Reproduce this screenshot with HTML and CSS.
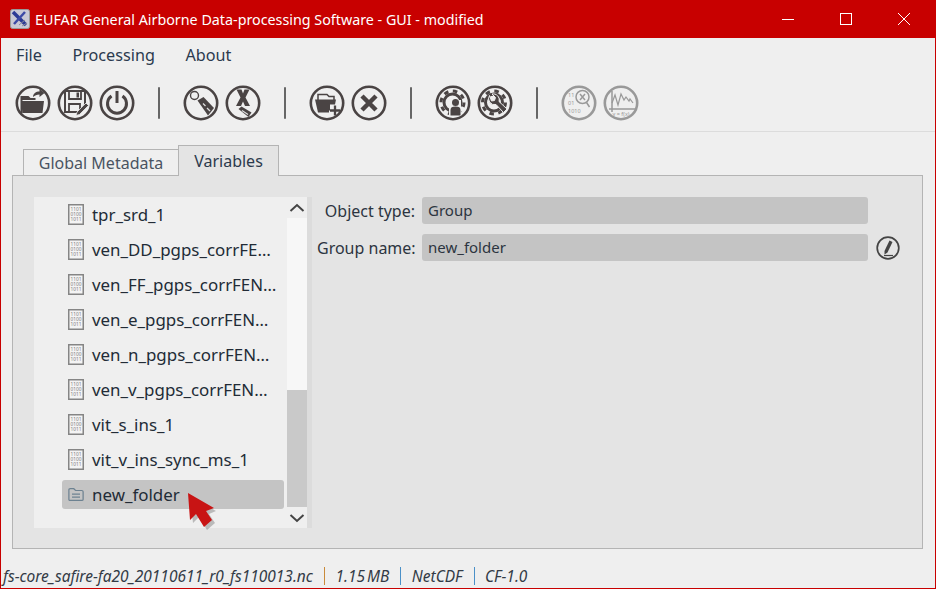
FILE: index.html
```html
<!DOCTYPE html>
<html lang="en">
<head>
	<meta charset="utf-8" />
	<title>EUFAR General Airborne Data-processing Software - GUI - modified</title>
	<link rel="stylesheet" href="styles.css">
</head>
<body>
	<svg class="defs" width="0" height="0">
		<symbol id="ico-ring" viewBox="0 0 36 36">
			<circle cx="18" cy="18" r="16.200" fill="none" stroke="currentColor" stroke-width="2.600"/>
		</symbol>
		<symbol id="ico-sheet" viewBox="0 0 16 21">
			<rect x="0.750" y="0.750" width="14.500" height="19.500" fill="#f4f4f4" stroke="#858585" stroke-width="1.500"/>
		</symbol>
	</svg>

	<div class="window">
		<header class="titlebar">
			<svg class="app-logo" width="20" height="20" viewBox="0 0 20 20">
				<rect x="0.500" y="0.500" width="19" height="19" rx="2" fill="#c9c9d6" stroke="#999"/>
				<path d="M3 3l13 13" stroke="#2c3a96" stroke-width="3.500"/>
				<path d="M15 3L4 15" stroke="#3c4aa6" stroke-width="2.500"/>
				<path d="M9 16l6-5M12 17l5-3" stroke="#8a8a9a" stroke-width="1"/>
			</svg>
			<span class="title">EUFAR General Airborne Data-processing Software - GUI - modified</span>
			<div class="win-controls">
				<svg width="14" height="14" viewBox="0 0 14 14"><path d="M1 7.500h12" stroke="#fff"/></svg>
				<svg width="14" height="14" viewBox="0 0 14 14"><rect x="1.500" y="1.500" width="11" height="11" fill="none" stroke="#fff"/></svg>
				<svg width="14" height="14" viewBox="0 0 14 14"><path d="M1 1l12 12M13 1L1 13" stroke="#fff"/></svg>
			</div>
		</header>

		<nav class="menubar">
			<span>File</span>
			<span>Processing</span>
			<span>About</span>
		</nav>

		<div class="toolbar">
			<div class="tool-group">
				<svg class="tool" viewBox="0 0 36 36"><use href="#ico-ring"/>
					<path d="M5.500 11h8l2 2h5v2H7.500v13h-2z" fill="currentColor"/>
					<path d="M6 16h23l-1.500 12H7.500z" fill="currentColor"/>
					<path d="M18 12c0-3.500 3-5.500 6.500-5.500V4l5 4-5 4V9.500c-3 0-4.500 1-6.500 2.500z" fill="currentColor"/>
				</svg>
				<svg class="tool" viewBox="0 0 36 36"><use href="#ico-ring"/>
					<path d="M8 6h20v14l-6 7H8z" fill="none" stroke="currentColor" stroke-width="2"/>
					<path d="M12 6h12v8H12z" fill="none" stroke="currentColor" stroke-width="1.800"/>
					<path d="M19.500 7.500h2.500v5h-2.500z" fill="currentColor"/>
					<path d="M12 19h11v8H12z" fill="none" stroke="currentColor" stroke-width="1.800"/>
					<path d="M20 27l9-9 2.500 2.500-9 9-3.500 1z" fill="currentColor" stroke="#efefef" stroke-width=".8"/>
				</svg>
				<svg class="tool" viewBox="0 0 36 36"><use href="#ico-ring"/>
					<path d="M12.500 11a9.500 9.500 0 1 0 11 0" fill="none" stroke="currentColor" stroke-width="3"/>
					<path d="M18 6v12" stroke="currentColor" stroke-width="3"/>
				</svg>
			</div>
			<i class="tool-sep"></i>
			<div class="tool-group">
				<svg class="tool" viewBox="0 0 36 36"><use href="#ico-ring"/>
					<circle cx="11.500" cy="10.500" r="4" fill="none" stroke="currentColor" stroke-width="1.400"/>
					<path d="M14.500 15.500l6-3.500 10.500 11-6 7.500z" fill="currentColor"/>
					<path d="M20 18.500l2.500 2.500M24 23l3 3" stroke="#ddd" stroke-width="1.300"/>
				</svg>
				<svg class="tool" viewBox="0 0 36 36"><use href="#ico-ring"/>
					<path d="M11.500 4.500h5l1.500 4 1.500-4h5l-4 8 4.500 8.500h-5L18 16.500 16 21h-5l4.500-8.500z" fill="currentColor"/>
					<path d="M13.500 24l3-2.500 10 6-3 4.500z" fill="currentColor"/>
					<path d="M17 25.500l6 4" stroke="#ddd" stroke-width="1.200"/>
				</svg>
			</div>
			<i class="tool-sep"></i>
			<div class="tool-group">
				<svg class="tool" viewBox="0 0 36 36"><use href="#ico-ring"/>
					<path d="M9 15V9.500h9l2 2h5V15" fill="none" stroke="currentColor" stroke-width="1.500"/>
					<path d="M6 14.500h21l-1 5h-5v6h-1v2H9z" fill="currentColor"/>
					<path d="M26 20.500v10M21 25.500h10" stroke="currentColor" stroke-width="2.300"/>
				</svg>
				<svg class="tool" viewBox="0 0 36 36"><use href="#ico-ring"/>
					<path d="M11 11l14 14M25 11L11 25" stroke="currentColor" stroke-width="4.500"/>
				</svg>
			</div>
			<i class="tool-sep"></i>
			<div class="tool-group">
				<svg class="tool" viewBox="0 0 36 36"><use href="#ico-ring"/>
					<circle cx="17.500" cy="17.500" r="11.500" fill="none" stroke="currentColor" stroke-width="3" stroke-dasharray="4.500 4.530"/>
					<circle cx="17.500" cy="17.500" r="8.500" fill="none" stroke="currentColor" stroke-width="3"/>
					<path d="M14 15h12v16H14z" fill="#efefef"/>
					<circle cx="20.500" cy="17.500" r="3.500" fill="currentColor"/>
					<path d="M15.500 30.500v-5.500c0-2.500 1.500-3.500 5-3.500s5 1 5 3.500v5.500z" fill="currentColor"/>
				</svg>
				<svg class="tool" viewBox="0 0 36 36"><use href="#ico-ring"/>
					<circle cx="17" cy="17.500" r="11.500" fill="none" stroke="currentColor" stroke-width="3" stroke-dasharray="4.500 4.530"/>
					<circle cx="17" cy="17.500" r="8.500" fill="none" stroke="currentColor" stroke-width="3"/>
					<path d="M12.500 10.500a6 6 0 0 0 6.500 9l7.500 8 3.500-3.500-8-7.500a6 6 0 0 0-7-7.500l3.500 3.500-1 3-3 .500z" fill="currentColor" stroke="#efefef" stroke-width="1"/>
				</svg>
			</div>
			<i class="tool-sep"></i>
			<div class="tool-group muted">
				<svg class="tool" viewBox="0 0 36 36"><use href="#ico-ring"/>
					<text class="tiny-digits" x="7" y="12">11</text>
					<text class="tiny-digits" x="7" y="20">01</text>
					<text class="tiny-digits" x="7" y="28">1010</text>
					<circle cx="21.500" cy="12" r="6.500" fill="#efefef" stroke="currentColor" stroke-width="1.500"/>
					<path d="M19 9l5 6M24 9l-5 6M25.500 17.500l3 4.500" stroke="currentColor" stroke-width="1.500"/>
				</svg>
				<svg class="tool" viewBox="0 0 36 36"><use href="#ico-ring"/>
					<path d="M9 6v21M6 24h26" stroke="currentColor" stroke-width="1.500"/>
					<path d="M9 18l3-8 3 10 3-11 3 6 2-3 3 4 1-2 3 4" fill="none" stroke="currentColor" stroke-width="1.200"/>
					<text class="tiny-digits" x="18" y="31" text-anchor="middle">y = f(x)</text>
				</svg>
			</div>
		</div>

		<main class="content">
			<div class="tabs">
				<div class="tab">Global Metadata</div>
				<div class="tab active">Variables</div>
			</div>
			<section class="tab-panel">
				<div class="tree">
					<ul class="tree-items">
						<li>
							<svg class="leaf" viewBox="0 0 16 21"><use href="#ico-sheet"/><text class="bits" x="8" y="7">1101</text><text class="bits" x="8" y="12.200">0100</text><text class="bits" x="8" y="17.400">1011</text></svg>
							<span>tpr_srd_1</span>
						</li>
						<li>
							<svg class="leaf" viewBox="0 0 16 21"><use href="#ico-sheet"/><text class="bits" x="8" y="7">1101</text><text class="bits" x="8" y="12.200">0100</text><text class="bits" x="8" y="17.400">1011</text></svg>
							<span>ven_DD_pgps_corrFE…</span>
						</li>
						<li>
							<svg class="leaf" viewBox="0 0 16 21"><use href="#ico-sheet"/><text class="bits" x="8" y="7">1101</text><text class="bits" x="8" y="12.200">0100</text><text class="bits" x="8" y="17.400">1011</text></svg>
							<span>ven_FF_pgps_corrFEN…</span>
						</li>
						<li>
							<svg class="leaf" viewBox="0 0 16 21"><use href="#ico-sheet"/><text class="bits" x="8" y="7">1101</text><text class="bits" x="8" y="12.200">0100</text><text class="bits" x="8" y="17.400">1011</text></svg>
							<span>ven_e_pgps_corrFEN…</span>
						</li>
						<li>
							<svg class="leaf" viewBox="0 0 16 21"><use href="#ico-sheet"/><text class="bits" x="8" y="7">1101</text><text class="bits" x="8" y="12.200">0100</text><text class="bits" x="8" y="17.400">1011</text></svg>
							<span>ven_n_pgps_corrFEN…</span>
						</li>
						<li>
							<svg class="leaf" viewBox="0 0 16 21"><use href="#ico-sheet"/><text class="bits" x="8" y="7">1101</text><text class="bits" x="8" y="12.200">0100</text><text class="bits" x="8" y="17.400">1011</text></svg>
							<span>ven_v_pgps_corrFEN…</span>
						</li>
						<li>
							<svg class="leaf" viewBox="0 0 16 21"><use href="#ico-sheet"/><text class="bits" x="8" y="7">1101</text><text class="bits" x="8" y="12.200">0100</text><text class="bits" x="8" y="17.400">1011</text></svg>
							<span>vit_s_ins_1</span>
						</li>
						<li>
							<svg class="leaf" viewBox="0 0 16 21"><use href="#ico-sheet"/><text class="bits" x="8" y="7">1101</text><text class="bits" x="8" y="12.200">0100</text><text class="bits" x="8" y="17.400">1011</text></svg>
							<span>vit_v_ins_sync_ms_1</span>
						</li>
						<li class="selected">
							<svg class="folder" viewBox="0 0 18 15">
								<path d="M1 13V2.500C1 1.500 1.500 1 2.500 1h4l2 2h7c1 0 1.500.5 1.500 1.500V13c0 1-.5 1-1.500 1h-13C1.500 14 1 14 1 13z" fill="none" stroke="#6d8291" stroke-width="1.400"/>
								<path d="M4.500 7h9M4.500 10.500h9" stroke="#6d8291" stroke-width="1.400"/>
							</svg>
							<span>new_folder</span>
						</li>
					</ul>
					<div class="scrollbar">
						<svg class="arrow" width="16" height="10" viewBox="0 0 16 10"><path d="M1.500 8L8 2l6.500 6" fill="none" stroke="#444" stroke-width="2"/></svg>
						<div class="scroll-track"><div class="scroll-thumb"></div></div>
						<svg class="arrow" width="16" height="10" viewBox="0 0 16 10"><path d="M1.500 2L8 8l6.500-6" fill="none" stroke="#444" stroke-width="2"/></svg>
					</div>
					<svg class="pointer" width="34" height="42" viewBox="0 0 34 42">
						<path class="pointer-shadow" d="M3 5l26 15-7 3 6 9-8 7-8-13-6 6z"/>
						<path d="M1 2l26 15-8 3 6 9-8 7-8-13-6 6z" fill="#c81414"/>
					</svg>
				</div>

				<div class="details">
					<div class="field">
						<label>Object type:</label>
						<div class="value">Group</div>
						<span class="edit-slot"></span>
					</div>
					<div class="field">
						<label>Group name:</label>
						<div class="value">new_folder</div>
						<svg class="edit-slot" width="24" height="24" viewBox="0 0 24 24">
							<circle cx="12" cy="12" r="10.800" fill="none" stroke="#444" stroke-width="1.700"/>
							<path d="M13.500 4.500l3 1.500-5 10.500-3 2 0-3.500z" fill="#444"/>
							<path d="M8 19.500h9" stroke="#444" stroke-width="1.200"/>
						</svg>
					</div>
				</div>
			</section>
		</main>

		<footer class="statusbar">
			<span>fs-core_safire-fa20_20110611_r0_fs110013.nc</span><i></i>
			<span class="size">1.15 MB</span><i></i>
			<span>NetCDF</span><i></i>
			<span>CF-1.0</span>
		</footer>
	</div>
</body>
</html>
```

FILE: styles.css
```css
html, body {
	margin: 0;
	height: 100%;
}
body {
	background: #efefef;
	font-family: "Noto Sans", sans-serif;
	font-size: 16px;
	color: #2c3440;
}
.defs {
	position: absolute;
}
.window {
	display: flex;
	flex-direction: column;
	height: 589px;
	box-sizing: border-box;
	border: 1px solid #c80000;
	border-top: 0;
	overflow: hidden;
}

/* title bar */
.titlebar {
	display: flex;
	align-items: center;
	flex: 0 0 38px;
	margin: 0 -1px;
	padding-left: 10px;
	background: #c80000;
	color: #fff;
}
.app-logo {
	margin-right: 5px;
}
.title {
	flex: 1;
	font-size: 14.300px;
}
.win-controls {
	display: flex;
	gap: 44px;
	margin-right: 25px;
}

/* menu */
.menubar {
	display: flex;
	gap: 30.500px;
	flex: 0 0 34px;
	align-items: center;
	padding: 0 0 1px 15px;
	box-sizing: border-box;
	font-size: 16.200px;
	color: #2b3a4e;
}

/* toolbar */
.toolbar {
	display: flex;
	align-items: center;
	flex: 0 0 60px;
	padding: 3px 0 0 14px;
	box-sizing: border-box;
	border-bottom: 1px solid #dcdcdc;
	color: #4a4444;
}
.tool-group {
	display: flex;
	gap: 6px;
}
.tool {
	width: 36px;
	height: 36px;
}
.muted {
	color: #999;
}
.tiny-digits {
	font-size: 5.500px;
	fill: currentColor;
}
.bits {
	font-size: 4.800px;
	text-anchor: middle;
	fill: #7c7c7c;
}
.tool-sep {
	width: 2px;
	height: 32px;
	margin: 0 23px;
	background: #666;
	border-radius: 1px;
}

/* tabs */
.content {
	display: flex;
	flex-direction: column;
	flex: 1;
	padding: 13px 12px 0 11px;
}
.tabs {
	display: flex;
	align-items: flex-end;
	padding-left: 11px;
	margin-bottom: -1px;
}
.tab {
	position: relative;
	width: 156px;
	height: 27px;
	box-sizing: border-box;
	text-align: center;
	line-height: 27px;
	border: 1px solid #b4b4b4;
	border-bottom: 0;
	color: #4a5462;
}
.tab.active {
	width: 101px;
	height: 31px;
	line-height: 30px;
	margin-left: -1px;
	background: #e4e4e4;
	color: #2c3a4c;
	z-index: 1;
}
.tab-panel {
	display: flex;
	height: 374px;
	box-sizing: border-box;
	padding: 21px 22px 20px 21px;
	background: #e4e4e4;
	border: 1px solid #b4b4b4;
}

/* tree */
.tree {
	position: relative;
	display: flex;
	width: 278px;
	background: #efefef;
}
.tree-items {
	flex: 1;
	min-width: 0;
	list-style: none;
	margin: 0;
	padding: 0 0 0 28px;
	overflow: hidden;
}
.tree-items li {
	display: flex;
	align-items: center;
	gap: 8px;
	height: 35px;
	padding-left: 6px;
	white-space: nowrap;
	font-size: 16.900px;
	color: #222b36;
}
.tree-items li.selected {
	height: 29px;
	margin-top: 3px;
	margin-right: 3px;
	background: #c4c4c4;
	border-radius: 3px;
}
.leaf {
	flex: none;
	width: 16px;
	height: 21px;
}
.folder {
	flex: none;
	width: 16px;
	height: 15px;
}
.scrollbar {
	flex: none;
	display: flex;
	flex-direction: column;
	align-items: center;
	width: 25px;
	padding-right: 5px;
	box-sizing: border-box;
	background: linear-gradient(to right, #efefef 20px, #dcdcdc 20px);
}
.arrow {
	flex: none;
	margin: 6px 0 5px;
}
.scroll-track {
	flex: 1;
	width: 20px;
	background: #f7f7f7;
	display: flex;
	flex-direction: column;
	justify-content: flex-end;
}
.scroll-thumb {
	height: 117px;
	background: #c9c9c9;
}
.pointer {
	position: absolute;
	left: 153px;
	top: 294px;
}
.pointer-shadow {
	fill: #000;
	opacity: .22;
}

/* detail form */
.details {
	display: flex;
	flex-direction: column;
	flex: 1;
	gap: 10px;
	padding-left: 5px;
}
.field {
	display: flex;
	align-items: center;
	gap: 7px;
	height: 27px;
}
.field label {
	width: 98px;
	text-align: right;
	font-size: 16px;
	color: #2c3440;
	white-space: nowrap;
}
.value {
	flex: 1;
	height: 27px;
	line-height: 27px;
	padding-left: 6px;
	background: #c4c4c4;
	border-radius: 3px;
	font-size: 15px;
}
.edit-slot {
	display: block;
	flex: none;
	width: 24px;
	height: 24px;
	margin-left: 1px;
}

/* status bar */
.statusbar {
	display: flex;
	align-items: center;
	flex: 0 0 39px;
	padding: 14px 0 0 2px;
	box-sizing: border-box;
	font-size: 15.500px;
	font-style: italic;
	color: #333b46;
}
.statusbar .size {
	word-spacing: -2px;
}
.statusbar i {
	width: 1px;
	height: 18px;
	margin: 0 10.500px 0 11px;
	background: #4a90c8;
}
.statusbar i:first-of-type {
	background: #c98a3a;
}
```
